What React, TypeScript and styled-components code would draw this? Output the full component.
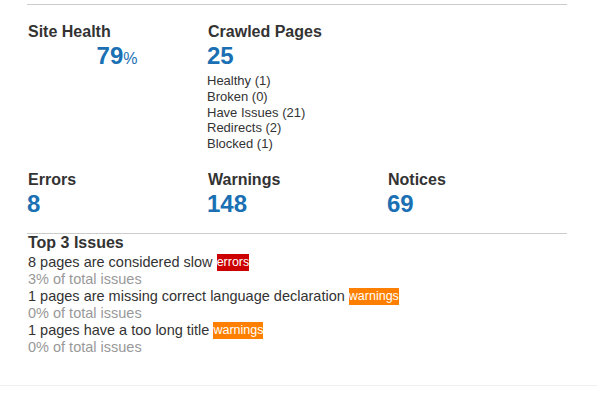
import React from 'react';
import styled, { createGlobalStyle } from 'styled-components';

const GlobalStyle = createGlobalStyle`
  body {
    margin: 0;
    background: #ffffff;
    font-family: 'Liberation Sans', Arial, sans-serif;
    color: #333333;
  }
`;

const Page = styled.div`
  width: 597px;
  padding: 4px 0 29px;
  border-bottom: 1px solid #eeeeee;
`;

const Panel = styled.div`
  width: 540px;
  margin-left: 27px;
`;

const Divider = styled.div`
  border-top: 1px solid #cccccc;
`;

const StatsRow = styled.div<{ top: number }>`
  display: grid;
  grid-template-columns: 180px 180px 180px;
  margin-top: ${props => props.top}px;
`;

const Stat = styled.div``;

const Title = styled.div`
  font-size: 16px;
  line-height: 18px;
  font-weight: bold;
  color: #333333;
  padding-left: 1px;
`;

const Value = styled.div<{ center?: boolean }>`
  margin-top: 1px;
  font-size: 24px;
  line-height: 28px;
  font-weight: bold;
  color: #1a70b3;
  text-align: ${props => (props.center ? 'center' : 'left')};
`;

const Unit = styled.span`
  font-size: 16px;
  font-weight: normal;
`;

const PageList = styled.ul`
  list-style: none;
  margin: 3px 0 0;
  padding: 0;
  font-size: 13px;
  line-height: 15.8px;
  color: #333333;
`;

const IssuesBlock = styled.div`
  margin-top: 15px;
  border-top: 1px solid #cccccc;
`;

const IssueHeading = styled.div`
  font-size: 16px;
  line-height: 18px;
  font-weight: bold;
  color: #333333;
  padding-left: 1px;
  margin-bottom: 2px;
`;

const IssueLine = styled.div`
  font-size: 14.5px;
  line-height: 17px;
  color: #333333;
  padding-left: 1px;
`;

const IssueShare = styled(IssueLine)`
  color: #999999;
`;

const Badge = styled.span<{ kind: 'errors' | 'warnings' }>`
  display: inline-block;
  font-size: 12.5px;
  line-height: 17px;
  vertical-align: top;
  color: #ffffff;
  background-color: ${props => (props.kind === 'errors' ? '#cc0000' : '#ff8000')};
`;

const crawled = [
  'Healthy (1)',
  'Broken (0)',
  'Have Issues (21)',
  'Redirects (2)',
  'Blocked (1)',
];

const issues: { text: string; kind: 'errors' | 'warnings'; share: string }[] = [
  { text: '8 pages are considered slow', kind: 'errors', share: '3% of total issues' },
  { text: '1 pages are missing correct language declaration', kind: 'warnings', share: '0% of total issues' },
  { text: '1 pages have a too long title', kind: 'warnings', share: '0% of total issues' },
];

const App: React.FC = () => {
  return (
    <Page>
      <GlobalStyle />
      <Panel>
        <Divider />

        <StatsRow top={18}>
          <Stat>
            <Title>Site Health</Title>
            <Value center>
              79<Unit>%</Unit>
            </Value>
          </Stat>
          <Stat>
            <Title>Crawled Pages</Title>
            <Value>25</Value>
            <PageList>
              {crawled.map(item => (
                <li key={item}>{item}</li>
              ))}
            </PageList>
          </Stat>
        </StatsRow>

        <StatsRow top={19}>
          <Stat>
            <Title>Errors</Title>
            <Value>8</Value>
          </Stat>
          <Stat>
            <Title>Warnings</Title>
            <Value>148</Value>
          </Stat>
          <Stat>
            <Title>Notices</Title>
            <Value>69</Value>
          </Stat>
        </StatsRow>

        <IssuesBlock>
          <IssueHeading>Top 3 Issues</IssueHeading>
          {issues.map(issue => (
            <React.Fragment key={issue.text}>
              <IssueLine>
                {issue.text} <Badge kind={issue.kind}>{issue.kind}</Badge>
              </IssueLine>
              <IssueShare>{issue.share}</IssueShare>
            </React.Fragment>
          ))}
        </IssuesBlock>
      </Panel>
    </Page>
  );
};

export default App;
